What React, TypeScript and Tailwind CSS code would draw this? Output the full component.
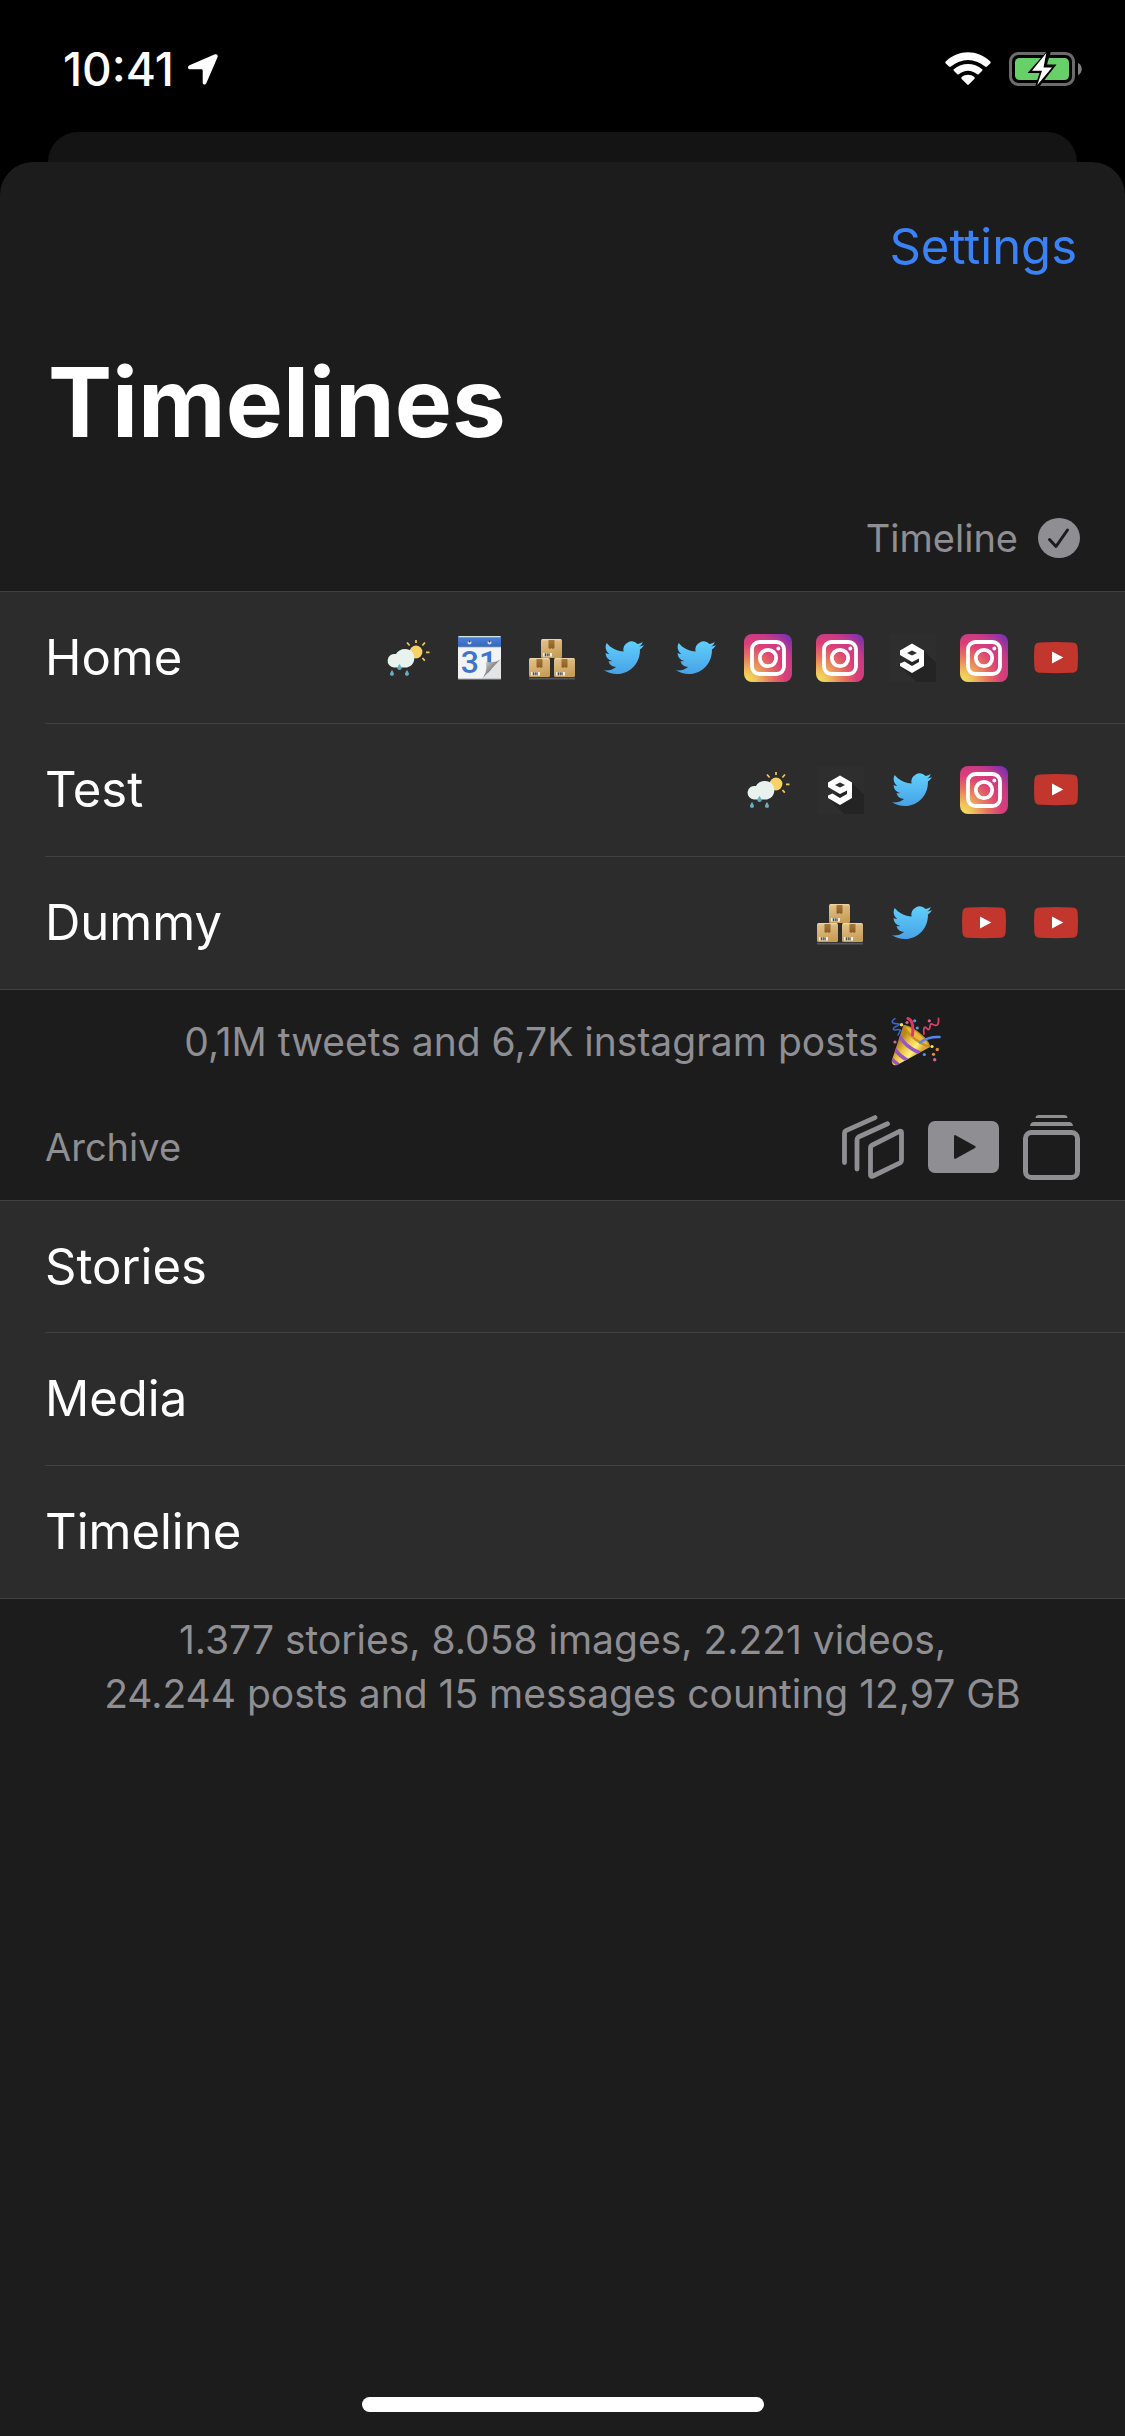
import type { ReactNode } from "react";

type SourceName = "weather" | "calendar" | "boxes" | "twitter" | "instagram" | "ninegag" | "youtube";

function Defs() {
  return (
    <svg className="absolute size-0" aria-hidden="true">
      <defs>
        <linearGradient id="bird" x1="0" y1="0" x2="0" y2="1">
          <stop offset="0" stopColor="#60cffc" />
          <stop offset="1" stopColor="#48a2e6" />
        </linearGradient>
        <radialGradient id="insta" gradientUnits="userSpaceOnUse" cx="2" cy="48" r="62">
          <stop offset="0" stopColor="#f3e35c" />
          <stop offset="0.16" stopColor="#f0c45c" />
          <stop offset="0.42" stopColor="#e5735f" />
          <stop offset="0.62" stopColor="#dc3f78" />
          <stop offset="0.8" stopColor="#c93a85" />
          <stop offset="1" stopColor="#8030b0" />
        </radialGradient>
        <linearGradient id="box" x1="0" y1="0" x2="0.3" y2="1">
          <stop offset="0" stopColor="#e3c48e" />
          <stop offset="1" stopColor="#c99f58" />
        </linearGradient>
        <linearGradient id="tape" x1="0" y1="0" x2="0" y2="1">
          <stop offset="0" stopColor="#a87838" />
          <stop offset="1" stopColor="#8a5c22" />
        </linearGradient>
        <linearGradient id="band" x1="0" y1="0" x2="0" y2="1">
          <stop offset="0" stopColor="#4d84dc" />
          <stop offset="1" stopColor="#3666b8" />
        </linearGradient>
        <linearGradient id="curl" x1="0" y1="0" x2="1" y2="1">
          <stop offset="0" stopColor="#f2f2f2" />
          <stop offset="0.55" stopColor="#7c7c7c" />
          <stop offset="1" stopColor="#c8c8c8" />
        </linearGradient>
        <linearGradient id="cone" gradientUnits="userSpaceOnUse" x1="7" y1="26" x2="26" y2="40">
          <stop offset="0" stopColor="#b8861c" />
          <stop offset="0.35" stopColor="#f0c546" />
          <stop offset="0.7" stopColor="#fdf27a" />
          <stop offset="1" stopColor="#d9a62e" />
        </linearGradient>
        <clipPath id="coneClip">
          <path d="M12.5 8 39 30 6 48C3 49 0 47 1 43Z" />
        </clipPath>
      </defs>
    </svg>
  );
}

function Box({ x, y }: { x: number; y: number }) {
  return (
    <g transform={`translate(${x} ${y})`}>
      <rect width="21" height="19" rx="1.6" fill="url(#box)" />
      <path d="M1 .8h19" stroke="#f2ddb4" strokeWidth="1" />
      <path d="M7.5 1h6v8l-1.5 1-1.5-1-1.5 1-1.5-1z" fill="url(#tape)" />
      <rect x="2" y="14" width="9" height="3.6" fill="#f3ede2" />
      <path d="M4.3 14.3v3M6.2 14.3v3M8 14.3v3" stroke="#35302a" strokeWidth="1.1" />
    </g>
  );
}

const drawings: Record<SourceName, ReactNode> = {
  weather: (
    <>
      <circle cx="32" cy="18" r="6.4" fill="#f8d268" />
      <path
        d="M32 6v3M41 8.5l-2.6 3M42 18.3h3.5M38.4 24l2.4 2.6M23 8.5l2.6 3"
        stroke="#f3c95f"
        strokeWidth="1.7"
      />
      <path
        d="M10 33.5a6.8 6.8 0 1 1 2-13.4c1.6-3.1 4.8-5.1 9.2-5.1 5.4 0 9.1 3.8 9.1 9.2 0 5.5-3.9 9.3-9.1 9.3z"
        fill="#e8f3ed"
      />
      <g fill="#65afc2">
        <path d="M8 36c2.6 3.6 2.6 5.6 0 5.8-2.6-.2-2.6-2.2 0-5.8zM15.5 30c2.8 3.6 2.8 5.8 0 6-2.8-.2-2.8-2.4 0-6zM23 36c2.6 3.6 2.6 5.6 0 5.8-2.6-.2-2.6-2.2 0-5.8z" />
      </g>
    </>
  ),
  calendar: (
    <>
      <rect x="2" y="2" width="43" height="43" rx="1" fill="#f2f3f5" />
      <path d="M2 2.5h43v10.500H2z" fill="url(#band)" />
      <path d="M3 2.6h41" stroke="#cfe6e4" strokeWidth="1.4" />
      <path d="M2 13.3h43" stroke="#c9cdd6" strokeWidth="1" />
      <g fill="#d5d8de">
        <circle cx="13.5" cy="8.5" r="2" />
        <circle cx="33.5" cy="8.5" r="2" />
      </g>
      <g fill="#3d3f4d">
        <circle cx="13.5" cy="7.3" r="1.1" />
        <circle cx="33.5" cy="7.3" r="1.1" />
      </g>
      <text
        x="23"
        y="39"
        textAnchor="middle"
        fontFamily="Roboto, sans-serif"
        fontWeight="500"
        fontSize="32"
        fill="#3f74cc"
      >
        31
      </text>
      <path d="M45 25 26 45h19z" fill="#e4e4e4" />
      <path d="M44.700 25C40 29 34 28 29.500 28.500 31.500 33.500 30 39.500 26 45Z" fill="url(#curl)" />
      <path d="M2 45h43" stroke="#a9abb0" strokeWidth="1" />
    </>
  ),
  boxes: (
    <>
      <path d="M1 44.6h46" stroke="#54585f" strokeWidth="1.6" />
      <Box x={13} y={5} />
      <Box x={1} y={24} />
      <Box x={26} y={24} />
    </>
  ),
  twitter: (
    <path
      transform="translate(4 3.7) scale(1.667)"
      fill="url(#bird)"
      d="M23.953 4.570a10 10 0 01-2.825.775 4.958 4.958 0 002.163-2.723c-.951.555-2.005.959-3.127 1.184a4.920 4.920 0 00-8.384 4.482C7.690 8.095 4.067 6.130 1.640 3.162a4.822 4.822 0 00-.666 2.475c0 1.710.870 3.213 2.188 4.096a4.904 4.904 0 01-2.228-.616v.060a4.923 4.923 0 003.946 4.827 4.996 4.996 0 01-2.212.085 4.936 4.936 0 004.604 3.417 9.867 9.867 0 01-6.102 2.105c-.390 0-.779-.023-1.170-.067a13.995 13.995 0 007.557 2.209c9.053 0 13.998-7.496 13.998-13.985 0-.210 0-.420-.015-.630A9.935 9.935 0 0024 4.590z"
    />
  ),
  instagram: (
    <>
      <rect width="48" height="48" rx="8" fill="url(#insta)" />
      <g fill="none" stroke="#fff" strokeWidth="3.8">
        <rect x="8" y="8" width="32" height="32" rx="7.5" />
        <circle cx="24" cy="24" r="8.2" />
      </g>
      <circle cx="34.3" cy="14.5" r="1.9" fill="#fff" />
    </>
  ),
  ninegag: (
    <>
      <rect x="1" width="47" height="48" fill="#2e2e2e" />
      <path d="M36 17 48 28.500V48H28.500L13 33z" fill="#242424" />
      <path
        d="M24 9.500 36 16.500V32L24 39 12 32V29.500L16.500 27.500 24 32 31 28V24.500L24 28 12 21V16.500ZM24 16.500 19 19 24 21.500 29 19Z"
        fill="#fff"
        fillRule="evenodd"
      />
    </>
  ),
  youtube: (
    <>
      <path
        d="M8 8.600Q24 7.400 40 8.600C44.500 9 45.300 10.500 45.700 14.500Q46.300 23 45.700 32.500C45.300 37 44 38.500 40 38.800Q24 39.600 8 38.800C4 38.500 2.700 37 2.300 32.500Q1.700 23 2.300 14.500C2.700 10.500 3.500 9 8 8.600Z"
        fill="#c2362e"
      />
      <path d="M20 17.600v11.800l11.300-5.900z" fill="#fff" />
    </>
  ),
};

function SourceIcon({ name }: { name: SourceName }) {
  return (
    <svg viewBox="0 0 48 48" className="size-12 shrink-0" role="img" aria-label={name}>
      {drawings[name]}
    </svg>
  );
}

function Popper() {
  return (
    <svg viewBox="0 0 50 50" className="size-[50px] shrink-0" role="img" aria-label="party popper">
      <path d="M12.5 8 39 30 6 48C3 49 0 47 1 43Z" fill="url(#cone)" />
      <g clipPath="url(#coneClip)" fill="none" stroke="#9656c4" strokeWidth="3.6">
        <path d="M8 18Q14 30 29 36" />
        <path d="M3 31Q8 39 18 44" />
        <path d="M0 41Q3 45 8 48" />
      </g>
      <path d="M12.5 8C20 7 40 23 39 30 31 31 13 17 12.5 8Z" fill="#c98f26" />
      <path d="M15 10C22 11 35 22 37 28 29 25 19 18 15 10Z" fill="#e9b844" />
      <g fill="none" strokeLinecap="round">
        <path d="M17 1.500C22 3 22.500 9 21.500 18" stroke="#d63c5e" strokeWidth="3" />
        <path d="M29 25.500Q37 19.500 48.500 20" stroke="#5585ee" strokeWidth="2.6" />
        <path d="M4 1.500C-1 5 1 7 8 7 9 9 1 10 2.500 12.500 4 14 9 11 9.500 13.500L7 18" stroke="#3b68d8" strokeWidth="1.5" />
        <path d="M33 17C32 9 34 9 37 12.500 40 13 38 6 41 7 46 10 48 8 47.500 1.500" stroke="#d4436d" strokeWidth="1.8" />
      </g>
      <g fill="#f4ea54">
        <circle cx="10.5" cy="7.8" r="1.7" />
        <circle cx="41" cy="29.5" r="1.6" />
      </g>
      <g fill="#5592f2">
        <circle cx="23.7" cy="3.8" r="1.6" />
        <circle cx="26.3" cy="11" r="1.6" />
        <circle cx="33.3" cy="37.5" r="1.6" />
      </g>
      <g fill="#e08f3a">
        <circle cx="46.3" cy="32.5" r="1.7" />
        <circle cx="42.5" cy="37.3" r="1.6" />
      </g>
      <g fill="#d95f9c">
        <circle cx="16" cy="5.5" r="1.6" />
        <circle cx="38.3" cy="3.8" r="1.6" />
        <circle cx="4" cy="25" r="1.6" />
        <circle cx="43.7" cy="42.7" r="1.7" />
      </g>
    </svg>
  );
}

function StatusBar() {
  return (
    <div className="flex h-[132px] items-start justify-between pl-[63px] pr-[43px] pt-[42px]">
      <div className="flex h-[54px] items-center gap-[14px]">
        <time className="text-[46px] font-medium leading-[54px]">10:41</time>
        <svg viewBox="0 0 30 31" className="h-[31px] w-[30px]" aria-label="Location in use" role="img">
          <path
            d="M27 .3 1.500 11.300C-.8 12.500-.3 15.200 2 15.300H13.500Q14.700 15.300 14.700 16.500V28.500C14.800 31 17.300 31.300 18.300 29.300L29.500 3.300C30.300 1.200 29 -.4 27 .3Z"
            fill="#fff"
          />
        </svg>
      </div>
      <div className="flex h-[54px] items-center gap-[18px]">
        <svg viewBox="0 0 46 34" className="h-[34px] w-[46px]" role="img" aria-label="Wi-Fi">
          <g fill="#fff">
            <path d="M1 9.200Q-.3 10.300.8 11.400L4 14.600Q5 15.400 6 14.500C16 5.800 30 5.800 40 14.500Q41 15.400 42 14.600L45.200 11.400Q46.300 10.300 45 9.200C32-2.600 14-2.600 1 9.200Z" />
            <path d="M8.800 17.300Q8 18 8.800 18.800L12.300 22.200Q13 22.800 13.800 22.200C19.500 17.500 26.500 17.500 32.200 22.200Q33 22.800 33.700 22.200L37.200 18.800Q38 18 37.200 17.300C29 10.200 17 10.200 8.800 17.300Z" />
            <path d="M16.500 25.200Q15.800 26 16.500 26.700L22.200 32.500Q23 33.300 23.800 32.500L29.500 26.700Q30.200 26 29.500 25.200C25.500 22 20.500 22 16.500 25.200Z" />
          </g>
        </svg>
        <svg viewBox="0 0 73 36" className="h-9 w-[73px]" role="img" aria-label="Battery charging">
          <rect x="1.5" y="2.5" width="63" height="31" rx="8" fill="none" stroke="#6c6c6c" strokeWidth="3" />
          <path d="M69 12C74 14 74 22 69 24z" fill="#808080" />
          <rect x="6" y="7" width="54" height="22" rx="4.5" fill="#68d068" />
          <path d="M38 0 18.500 22H30.500L26 36H30L47.500 13.500H38L42 0Z" fill="#000" />
          <path d="M37.300 2 23 19.800H33L28.300 34 43 16.500H34.500Z" fill="#fff" />
        </svg>
      </div>
    </div>
  );
}

function Row({ label, sources = [] }: { label: string; sources?: SourceName[] }) {
  return (
    <li className="group pl-[45px] last:pl-0">
      <button
        type="button"
        className="flex h-[133px] w-full items-center justify-between border-b border-[#414141] pr-[45px] text-left group-first:h-[132px] group-last:pl-[45px]"
      >
        <span className="text-[49px] leading-[60px]">{label}</span>
        <span className="flex gap-6">
          {sources.map((name, i) => (
            <SourceIcon key={i} name={name} />
          ))}
        </span>
      </button>
    </li>
  );
}

const timelines: { label: string; sources: SourceName[] }[] = [
  {
    label: "Home",
    sources: [
      "weather",
      "calendar",
      "boxes",
      "twitter",
      "twitter",
      "instagram",
      "instagram",
      "ninegag",
      "instagram",
      "youtube",
    ],
  },
  { label: "Test", sources: ["weather", "ninegag", "twitter", "instagram", "youtube"] },
  { label: "Dummy", sources: ["boxes", "twitter", "youtube", "youtube"] },
];

const archive = ["Stories", "Media", "Timeline"];

export default function App() {
  return (
    <div className="flex min-h-screen flex-col bg-black font-['Inter',sans-serif] text-white">
      <Defs />
      <StatusBar />
      <div className="mx-12 h-[30px] rounded-t-[30px] bg-[#141414]" />
      <main className="flex flex-1 flex-col rounded-t-[33px] bg-[#1c1c1c]">
        <div className="flex justify-end px-12 pt-[55px]">
          <button type="button" className="text-[49px] leading-[60px] text-[#3a82f7]">
            Settings
          </button>
        </div>
        <h1 className="px-12 pt-[65px] text-[96px] font-bold leading-[120px]">Timelines</h1>

        <section>
          <header className="flex h-[129px] items-center justify-end gap-5 px-[45px] pt-[23px] text-[#8e8e93]">
            <h2 className="text-[38px] leading-[54px]">Timeline</h2>
            <svg viewBox="0 0 42 40" className="h-10 w-[42px]" role="img" aria-label="Selected">
              <ellipse cx="21" cy="20" rx="21" ry="20" fill="#8e8e93" />
              <path
                d="M11.500 21.500 18 28.500 29.500 12"
                fill="none"
                stroke="#1c1c1c"
                strokeWidth="3"
                strokeLinecap="round"
                strokeLinejoin="round"
              />
            </svg>
          </header>
          <ul className="border-t border-[#414141] bg-[#2c2c2c]">
            {timelines.map((t) => (
              <Row key={t.label} label={t.label} sources={t.sources} />
            ))}
          </ul>
          <p className="flex items-center justify-center gap-3 pt-[25px] text-[39px] leading-[54px] text-[#8e8e93]">
            <span>0,1M tweets and 6,7K instagram posts</span>
            <Popper />
          </p>
        </section>

        <section>
          <header className="flex h-[131px] items-center justify-between px-[45px] pt-[25px] text-[#8e8e93]">
            <h2 className="text-[38px] leading-[54px]">Archive</h2>
            <div className="flex items-center gap-6">
              <button type="button" aria-label="Stories">
                <svg
                  viewBox="0 0 62 64"
                  className="h-16 w-[62px]"
                  fill="none"
                  stroke="#8e8e93"
                  strokeWidth="4.8"
                  strokeLinecap="round"
                  strokeLinejoin="round"
                >
                  <path d="M2.500 47.500V18Q2.500 16.500 4 15.600L33 2.600" />
                  <path d="M15 54V25Q15 23 16.500 22L45.500 8.800" />
                  <path d="M30.500 30 57.500 16.300Q59.500 15.500 59.500 17.500V45.500Q59.500 47 58 47.800L31 61Q28.500 62 28.500 60V33Q28.500 31 30.500 30Z" />
                </svg>
              </button>
              <button type="button" aria-label="Media">
                <svg viewBox="0 0 71 52" className="h-[52px] w-[71px]">
                  <rect width="71" height="52" rx="7" fill="#8e8e93" />
                  <path d="M26 15.500Q26 13.500 28 14.400L47 25Q48.700 26 47 27L28 37.600Q26 38.500 26 36.500Z" fill="#1c1c1c" />
                </svg>
              </button>
              <button type="button" aria-label="Timeline">
                <svg viewBox="0 0 57 66" className="h-[66px] w-[57px]" fill="#8e8e93">
                  <path d="M12.500 4Q12.500 1 16 1H41Q44.500 1 44.500 4Z" />
                  <path d="M7 12Q7.500 8 11 8H46Q49.500 8 50 12Z" />
                  <rect x="2.5" y="18.5" width="52" height="45" rx="6" fill="none" stroke="#8e8e93" strokeWidth="5" />
                </svg>
              </button>
            </div>
          </header>
          <ul className="border-t border-[#414141] bg-[#2c2c2c]">
            {archive.map((label) => (
              <Row key={label} label={label} />
            ))}
          </ul>
          <p className="pt-[14px] text-center text-[39px] leading-[54px] text-[#8e8e93]">
            1.377 stories, 8.058 images, 2.221 videos,
            <br />
            24.244 posts and 15 messages counting 12,97 GB
          </p>
        </section>

        <div className="mx-auto mb-6 mt-auto h-[15px] w-[402px] rounded-full bg-white" />
      </main>
    </div>
  );
}
